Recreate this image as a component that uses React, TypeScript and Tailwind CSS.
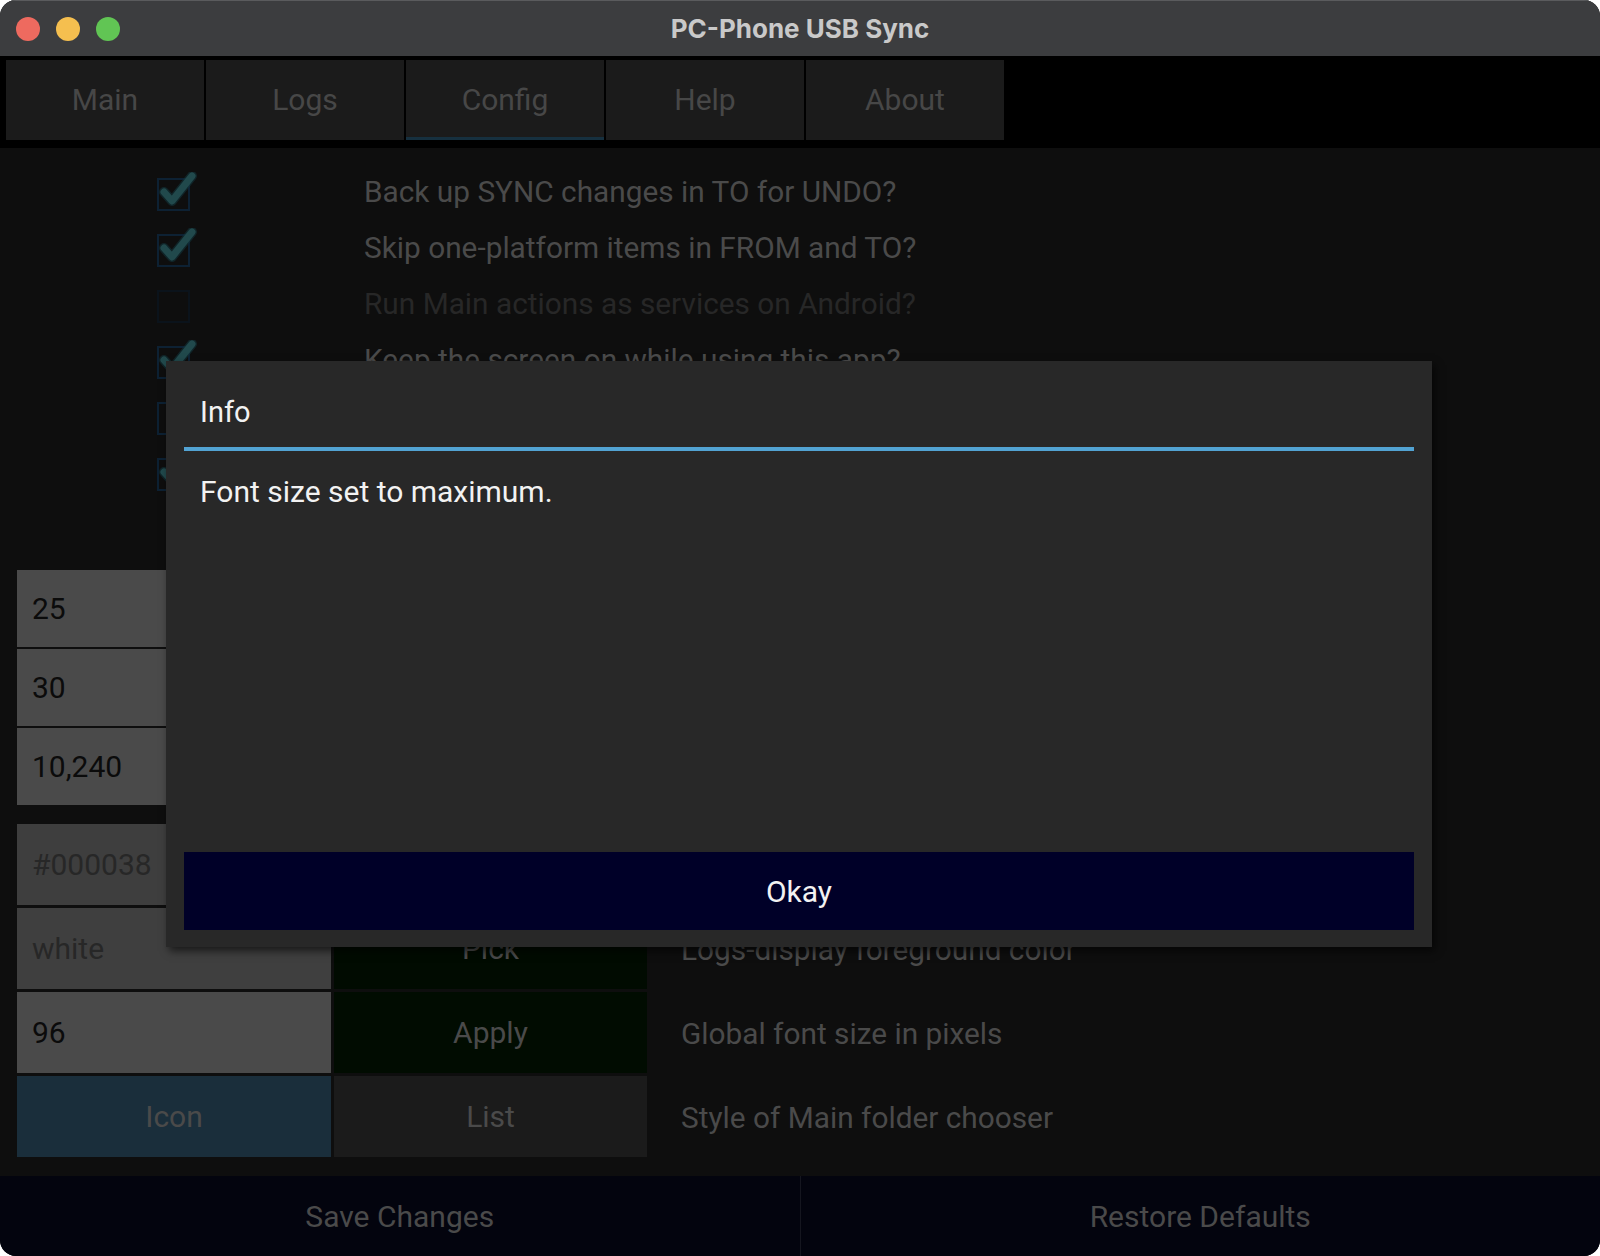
import React from "react";

const tabs = ["Main", "Logs", "Config", "Help", "About"];

const checks = [
  { label: "Back up SYNC changes in TO for UNDO?", on: true, disabled: false },
  { label: "Skip one-platform items in FROM and TO?", on: true, disabled: false },
  { label: "Run Main actions as services on Android?", on: false, disabled: true },
  { label: "Keep the screen on while using this app?", on: true, disabled: false },
  { label: "Show hidden files in folder choosers?", on: false, disabled: false },
  { label: "Confirm before running Main actions?", on: true, disabled: false },
];

const numberRows = [
  { value: "25", label: "Logs-display lines per page" },
  { value: "30", label: "Seconds before USB timeout" },
  { value: "10,240", label: "Maximum log size in kilobytes" },
];

const CheckBox = ({ on, disabled }: { on: boolean; disabled: boolean }) => (
  <svg width="44" height="40" viewBox="0 0 44 40" className="block">
    <rect
      x="1"
      y="7"
      width="31"
      height="31"
      fill="none"
      stroke={disabled ? "#0b131b" : "#0d2133"}
      strokeWidth="2"
    />
    {on && (
      <>
        <path
          d="M7 20 L15 29 L35 4"
          fill="none"
          stroke="#13333a"
          strokeWidth="10"
          strokeLinecap="round"
          strokeLinejoin="round"
          opacity="0.6"
        />
        <path
          d="M7 20 L15 29 L35 4"
          fill="none"
          stroke="#21494c"
          strokeWidth="7"
          strokeLinecap="round"
          strokeLinejoin="round"
        />
      </>
    )}
  </svg>
);

const Label = ({ children, dim }: { children: React.ReactNode; dim?: boolean }) => (
  <span className={`text-[29.8px] leading-none ${dim ? "text-[#272727]" : "text-[#4a4a4a]"}`}>{children}</span>
);

export default function App() {
  return (
    <div className="w-[1600px] h-[1256px] bg-white" style={{ fontFamily: "Roboto, 'Noto Sans', sans-serif" }}>
      <div className="relative w-full h-full rounded-[16px] overflow-hidden flex flex-col bg-[#0e0e0e]">
        {/* title bar */}
        <div className="h-[56px] shrink-0 bg-[#3c3d3f] border-t border-[#5a5b5d] flex items-center relative">
          <div className="flex items-center gap-[16px] pl-[16px]">
            <span className="w-[24px] h-[24px] rounded-full bg-[#ee6a5f]" />
            <span className="w-[24px] h-[24px] rounded-full bg-[#f5bf4f]" />
            <span className="w-[24px] h-[24px] rounded-full bg-[#61c554]" />
          </div>
          <div
            className="absolute inset-0 flex items-center justify-center text-[26px] font-bold text-[#c9c9c9]"
            style={{ fontFamily: "Inter, 'Liberation Sans', sans-serif" }}
          >
            PC-Phone USB Sync
          </div>
        </div>

        {/* tabs */}
        <div className="h-[92px] shrink-0 bg-black pt-[4px] pl-[6px] flex gap-[2px]">
          {tabs.map((t) => (
            <div
              key={t}
              className="relative w-[198px] h-[80px] bg-[#1b1b1b] flex items-center justify-center text-[30px] text-[#474747] pb-[2px]"
            >
              {t}
              {t === "Config" && <div className="absolute left-0 right-0 bottom-0 h-[3px] bg-[#16303f]" />}
            </div>
          ))}
        </div>

        {/* config body */}
        <div className="flex-1 flex flex-col pt-[16px]">
          <div className="flex flex-col">
            {checks.map((c) => (
              <div key={c.label} className="h-[56px] flex items-center">
                <div className="w-[364px] pl-[157px] flex items-center">
                  <CheckBox on={c.on} disabled={c.disabled} />
                </div>
                <Label dim={c.disabled}>{c.label}</Label>
              </div>
            ))}
          </div>

          <div className="mt-[70px] pl-[17px] flex flex-col gap-[2px]">
            {numberRows.map((r) => (
              <div key={r.value} className="h-[77px] flex items-center">
                <div className="w-[314px] h-full bg-[#4a4a4a] flex items-center pl-[15px] text-[30px] text-[#0b0b0b]">
                  {r.value}
                </div>
                <div className="pl-[350px]">
                  <Label>{r.label}</Label>
                </div>
              </div>
            ))}
          </div>

          <div className="mt-[19px] pl-[17px] flex flex-col gap-[3px]">
            <div className="h-[81px] flex items-center">
              <div className="w-[314px] h-full bg-[#3e3e3e] flex items-center pl-[15px] text-[30px] text-[#272727]">
                #000038
              </div>
              <div className="ml-[3px] w-[313px] h-full bg-[#010b01] flex items-center justify-center text-[30px] text-[#4a4a4a]">
                Pick
              </div>
              <div className="pl-[34px] pt-[4px]">
                <Label>Logs-display background color</Label>
              </div>
            </div>
            <div className="h-[81px] flex items-center">
              <div className="w-[314px] h-full bg-[#3f3f3f] flex items-center pl-[15px] text-[30px] text-[#272727]">
                white
              </div>
              <div className="ml-[3px] w-[313px] h-full bg-[#010b01] flex items-center justify-center text-[30px] text-[#4a4a4a]">
                Pick
              </div>
              <div className="pl-[34px] pt-[4px]">
                <Label>Logs-display foreground color</Label>
              </div>
            </div>
            <div className="h-[81px] flex items-center">
              <div className="w-[314px] h-full bg-[#4a4a4a] flex items-center pl-[15px] text-[30px] text-[#0b0b0b]">
                96
              </div>
              <div className="ml-[3px] w-[313px] h-full bg-[#010c01] flex items-center justify-center text-[30px] text-[#4a4a4a]">
                Apply
              </div>
              <div className="pl-[34px] pt-[4px]">
                <Label>Global font size in pixels</Label>
              </div>
            </div>
            <div className="h-[81px] flex items-center">
              <div className="w-[314px] h-full bg-[#1a2e3b] flex items-center justify-center text-[30px] text-[#4a4a4a]">
                Icon
              </div>
              <div className="ml-[3px] w-[313px] h-full bg-[#1b1b1b] flex items-center justify-center text-[30px] text-[#4a4a4a]">
                List
              </div>
              <div className="pl-[34px] pt-[4px]">
                <Label>Style of Main folder chooser</Label>
              </div>
            </div>
          </div>
        </div>

        {/* bottom actions */}
        <div className="h-[80px] shrink-0 bg-[#03040e] flex">
          <div className="flex-1 flex items-center justify-center text-[30px] text-[#4a4a4a]">Save Changes</div>
          <div className="w-[1px] bg-[#15161f]" />
          <div className="flex-1 flex items-center justify-center text-[30px] text-[#4a4a4a]">Restore Defaults</div>
        </div>

        {/* info popup */}
        <div className="absolute left-[166px] top-[361px] w-[1266px] h-[586px] bg-[#282828] shadow-[3px_4px_8px_rgba(0,0,0,0.6)] flex flex-col px-[18px] pb-[17px]">
          <div className="pt-[36px] pb-[20px] pl-[16px] text-[29px] leading-[30px] text-[#f2f2f2]">Info</div>
          <div className="h-[4px] bg-[#52a3d3]" />
          <div className="mt-[26px] pl-[16px] text-[30px] leading-[30px] text-[#f2f2f2]">Font size set to maximum.</div>
          <div className="mt-auto h-[78px] bg-[#000028] flex items-center justify-center text-[30px] text-[#f2f2f2]">
            Okay
          </div>
        </div>
      </div>
    </div>
  );
}
